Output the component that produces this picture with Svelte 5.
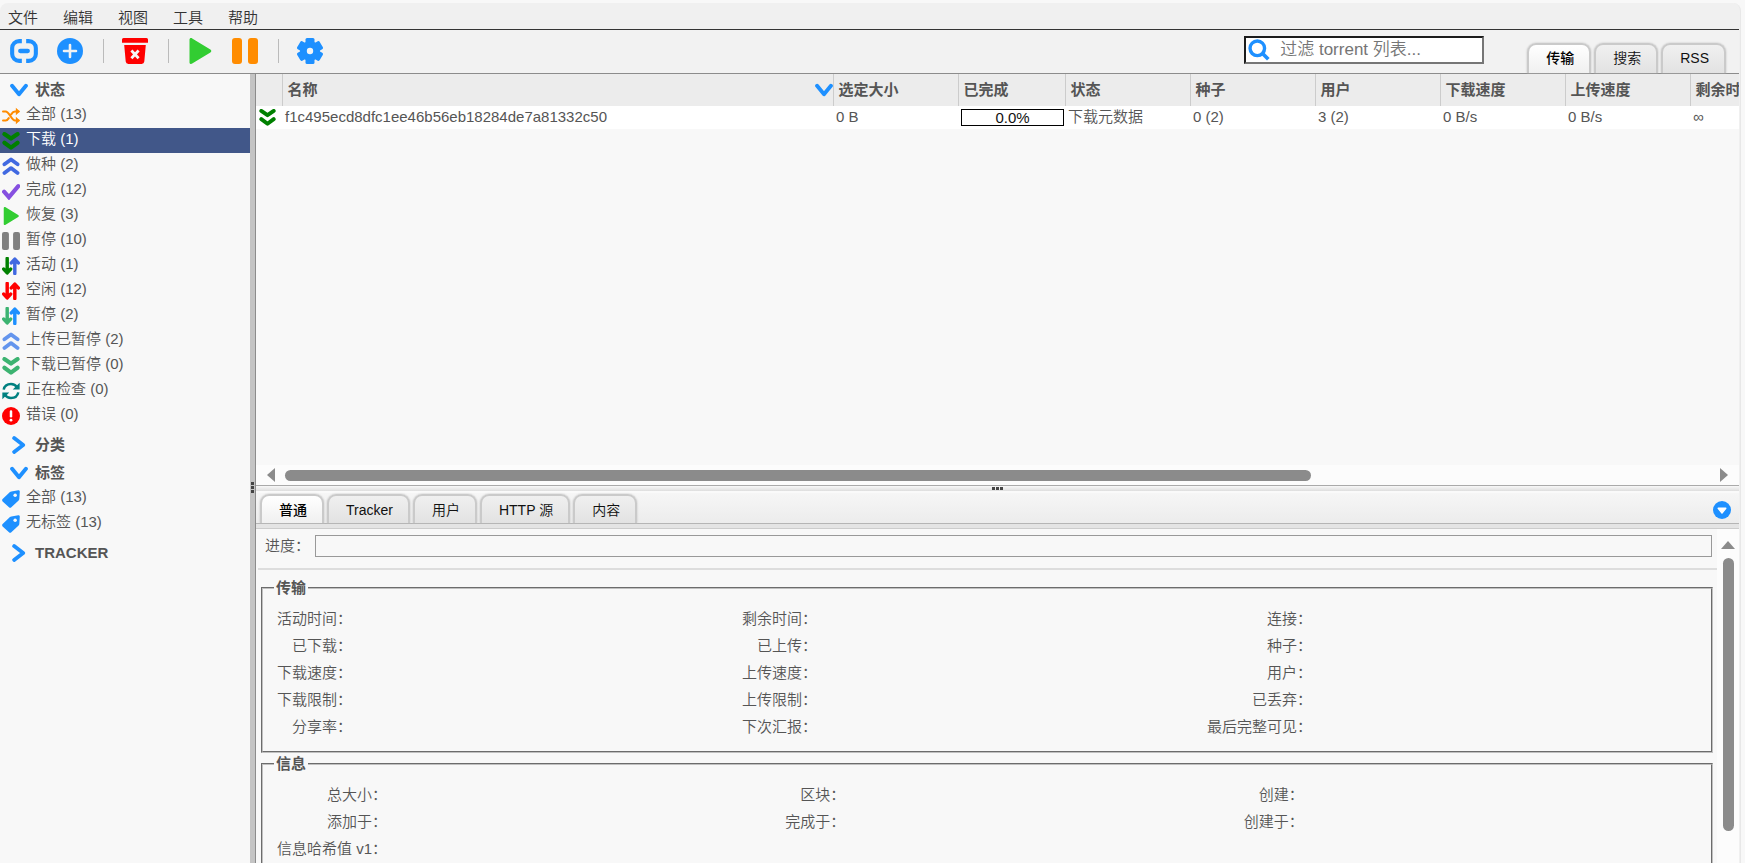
<script>
  const menus = ['文件', '编辑', '视图', '工具', '帮助'];
  const tools = [
    ['link', '添加链接', 28], ['plus', '添加文件', 26], null,
    ['trash', '删除', 26], null,
    ['play', '恢复', 26], ['pause', '暂停', 26], null,
    ['gear', '选项', 26]
  ];
  const statuses = [
    ['shuffle', '全部 (13)', '#ff8c00'],
    ['down', '下载 (1)', '#008000'],
    ['up', '做种 (2)', '#4169e1'],
    ['check', '完成 (12)', '#8650e0'],
    ['play', '恢复 (3)', '#32cd32'],
    ['pause', '暂停 (10)', '#808080'],
    ['updown', '活动 (1)', '#008000', '#4169e1'],
    ['updown', '空闲 (12)', '#ff0000', '#ff0000'],
    ['updown', '暂停 (2)', '#3cb371', '#1e90ff'],
    ['up', '上传已暂停 (2)', '#6495ed'],
    ['down', '下载已暂停 (0)', '#3cb371'],
    ['sync', '正在检查 (0)', '#008080'],
    ['error', '错误 (0)', '#ff0000']
  ];
  const tags = ['全部 (13)', '无标签 (13)'];
  const viewTabs = ['传输', '搜索', 'RSS'];
  const detailTabs = ['普通', 'Tracker', '用户', 'HTTP 源', '内容'];
  const columns = ['选定大小', '已完成', '状态', '种子', '用户', '下载速度', '上传速度', '剩余时间'];
  const transfer = [
    ['活动时间', '剩余时间', '连接'],
    ['已下载', '已上传', '种子'],
    ['下载速度', '上传速度', '用户'],
    ['下载限制', '上传限制', '已丢弃'],
    ['分享率', '下次汇报', '最后完整可见']
  ];
  const info = [
    ['总大小', '区块', '创建'],
    ['添加于', '完成于', '创建于'],
    ['信息哈希值 v1']
  ];
  const colors = { link: '#1e90ff', plus: '#1e90ff', trash: '#ff0000', play: '#32cd32', pause: '#ff8c00', gear: '#1e90ff' };
  let status = $state(1);
  let view = $state(0);
  let detail = $state(0);
</script>

{#snippet icon(name, size, a, b)}
  <svg width={size} height={size} viewBox="0 0 26 26" fill="none" aria-hidden="true">
    {#if name === 'link'}
      <path d="M11 3.800H8.500a6.500 6.500 0 0 0-6.500 6.500v5.400a6.500 6.500 0 0 0 6.500 6.500H11M15 3.800h2.500a6.500 6.500 0 0 1 6.500 6.500v5.400a6.500 6.500 0 0 1-6.500 6.500H15" stroke={a} stroke-width="3.800" />
      <path d="M9.500 13h7" stroke={a} stroke-width="4" stroke-linecap="round" />
    {:else if name === 'plus'}
      <circle cx="13" cy="13" r="13" fill={a} />
      <path d="M13 7v12M7 13h12" stroke="#f2f2f2" stroke-width="2.6" stroke-linecap="round" />
    {:else if name === 'trash'}
      <path d="M1.5 0h23A1.5 1.5 0 0 1 26 1.500v3.200H0V1.500A1.500 1.500 0 0 1 1.500 0zM2.200 7h21.600l-1.500 16.500a2.800 2.800 0 0 1-2.700 2.500H6.400a2.800 2.800 0 0 1-2.700-2.500z" fill={a} />
      <path d="M9.400 12.500l7.200 7.800M16.600 12.500l-7.200 7.800" stroke="#f5f5f5" stroke-width="2.800" />
    {:else if name === 'play'}
      <path d="M2.500 1.600C2.500.3 3.900-.4 5.200.4L23.400 11.500c1.200.7 1.200 2.300 0 3L5.200 25.600c-1.300.8-2.700.1-2.700-1.200z" fill={a} />
    {:else if name === 'pause'}
      <rect width="10" height="26" rx="3" fill={a} />
      <rect x="16" width="10" height="26" rx="3" fill={a} />
    {:else if name === 'gear'}
      <circle cx="13" cy="13" r="10" fill={a} />
      {#each [0, 60, 120] as turn}
        <rect x="8.500" y="0" width="9" height="26" rx="1.500" fill={a} transform="rotate({turn} 13 13)" />
      {/each}
      <circle cx="13" cy="13" r="3.200" fill="#f5f5f5" />
    {:else if name === 'shuffle'}
      <path d="M1.500 6.500h3.800c5 0 8.500 13 13.500 13H24M1.500 19.500h3.800c1.800 0 3.200-1.500 4.500-3.500M13.500 10.300c1.500-2.300 3.200-3.800 5.300-3.800H24" stroke={a} stroke-width="3" stroke-linecap="round" />
      <path d="M20 1l6 5.500-6 5.500zM20 14l6 5.500-6 5.500z" fill={a} />
    {:else if name === 'down'}
      <path d="M3.500 3l9.500 6.500L22.500 3M3.500 15.500l9.500 7 9.500-7" stroke={a} stroke-width="6" stroke-linecap="round" stroke-linejoin="round" />
    {:else if name === 'up'}
      <path d="M3.500 10.500L13 3.500l9.500 7M3.500 23l9.500-7 9.500 7" stroke={a} stroke-width="5.500" stroke-linecap="round" stroke-linejoin="round" />
    {:else if name === 'check'}
      <path d="M3 14l7 8L23.500 6" stroke={a} stroke-width="6" stroke-linecap="round" />
    {:else if name === 'updown'}
      <path d="M7.500 2v19M2.500 17.500l5 5.500 5-5.500" stroke={a} stroke-width="5" stroke-linecap="round" stroke-linejoin="round" />
      <path d="M18.500 24V5M13.500 8.500l5-5.500 5 5.500" stroke={b} stroke-width="5" stroke-linecap="round" stroke-linejoin="round" />
    {:else if name === 'sync'}
      <path d="M2.500 11C3.500 5.500 8 2.800 13 2.800c4 0 7 2 9 5M23.500 15c-1 5.500-5.500 8.200-10.500 8.200-4 0-7-2-9-5" stroke={a} stroke-width="3.600" />
      <path d="M25.500 1v10h-10zM.500 25V15h10z" fill={a} />
    {:else if name === 'error'}
      <circle cx="13" cy="13" r="13" fill={a} />
      <path d="M13 6.500v7" stroke="#fff" stroke-width="3.600" stroke-linecap="round" />
      <circle cx="13" cy="19" r="2" fill="#fff" />
    {:else if name === 'tag'}
      <path d="M13.500 2l10-1.500c1.400-.2 2.300.8 2.200 2.100L25 13c0 .8-.4 1.400-1 2L13.500 25c-1 1-2.400 1-3.400 0L.9 16.500c-1-1-1-2.400 0-3.400L11.500 3c.6-.6 1.200-.9 2-1z" fill={a} />
      <circle cx="19" cy="7.500" r="2.500" fill="#f8f8f8" />
    {:else if name === 'open'}
      <path d="M3 7l10 12L23 7" stroke={a} stroke-width="5.600" stroke-linecap="round" stroke-linejoin="round" />
    {:else if name === 'closed'}
      <path d="M6 3l13 10L6 23" stroke={a} stroke-width="5.600" stroke-linecap="round" stroke-linejoin="round" />
    {:else if name === 'search'}
      <circle cx="11" cy="11" r="8.600" stroke={a} stroke-width="4" />
      <path d="M17.500 17.500l6.500 6.500" stroke={a} stroke-width="4.400" />
    {:else if name === 'collapse'}
      <circle cx="13" cy="13" r="13" fill={a} />
      <path d="M7.500 10.500h11L13 17.500z" fill="#fff" stroke="#fff" stroke-width="2" stroke-linejoin="round" />
    {/if}
  </svg>
{/snippet}

{#snippet facts(title, rows)}
  <fieldset>
    <legend>{title}</legend>
    <div class="facts">
      {#each rows as row}
        {#each row as label}
          <span class="label">{label}：</span><span></span>
        {/each}
      {/each}
    </div>
  </fieldset>
{/snippet}

<div class="desktop">
  <div class="app">
    <nav class="menu">
      {#each menus as name}<button>{name}</button>{/each}
    </nav>

    <header class="toolbar">
      <div class="tools">
        {#each tools as tool}
          {#if tool}
            <button aria-label={tool[1]} class={tool[0]}>{@render icon(tool[0], tool[2], colors[tool[0]])}</button>
          {:else}
            <i class="rule"></i>
          {/if}
        {/each}
      </div>
      <label class="search">
        {@render icon('search', 22, '#1e90ff')}
        <input type="text" placeholder="过滤 torrent 列表..." aria-label="过滤 torrent 列表" />
      </label>
      <div class="tabs">
        {#each viewTabs as name, i}
          <button class:active={view === i} onclick={() => (view = i)}>{name}</button>
        {/each}
      </div>
    </header>

    <div class="body">
      <aside>
        <h2>{@render icon('open', 18, '#1e90ff')}状态</h2>
        <ul>
          {#each statuses as [name, text, a, b], i}
            <li><button class:selected={status === i} onclick={() => (status = i)}>{@render icon(name, 18, a, b)}<span>{text}</span></button></li>
          {/each}
        </ul>
        <h2 class="later">{@render icon('closed', 18, '#1e90ff')}分类</h2>
        <h2>{@render icon('open', 18, '#1e90ff')}标签</h2>
        <ul>
          {#each tags as text}
            <li><button>{@render icon('tag', 18, '#1e90ff')}<span>{text}</span></button></li>
          {/each}
        </ul>
        <h2 class="later">{@render icon('closed', 18, '#1e90ff')}TRACKER</h2>
      </aside>

      <div class="split vertical"><i></i><i></i><i></i></div>

      <main>
        <section class="list">
          <div class="viewport">
            <table>
              <colgroup>
                <col class="c-icon" /><col class="c-name" /><col class="c-std" /><col class="c-done" />
                <col class="c-std" /><col class="c-std" /><col class="c-std" /><col class="c-std" /><col class="c-std" /><col class="c-std" />
              </colgroup>
              <thead>
                <tr>
                  <th></th>
                  <th><div class="sorted">名称{@render icon('open', 18, '#1e90ff')}</div></th>
                  {#each columns as name}<th>{name}</th>{/each}
                </tr>
              </thead>
              <tbody>
                <tr>
                  <td class="mid">{@render icon('down', 17, '#008000')}</td>
                  <td>f1c495ecd8dfc1ee46b56eb18284de7a81332c50</td>
                  <td>0 B</td>
                  <td class="mid"><div class="percent">0.0%</div></td>
                  <td>下载元数据</td>
                  <td>0 (2)</td>
                  <td>3 (2)</td>
                  <td>0 B/s</td>
                  <td>0 B/s</td>
                  <td>∞</td>
                </tr>
              </tbody>
            </table>
          </div>
          <div class="hscroll">
            <svg width="8" height="14" viewBox="0 0 8 14"><path d="M8 0v14L0 7z" fill="#8b8b8b" /></svg>
            <div class="track"><div class="thumb"></div></div>
            <svg width="8" height="14" viewBox="0 0 8 14"><path d="M0 0v14l8-7z" fill="#8b8b8b" /></svg>
          </div>
        </section>

        <div class="split horizontal"><i></i><i></i><i></i></div>

        <section class="details">
          <div class="detailbar">
            <div class="tabs">
              {#each detailTabs as name, i}
                <button class:active={detail === i} onclick={() => (detail = i)}>{name}</button>
              {/each}
            </div>
            <button class="collapse" aria-label="折叠">{@render icon('collapse', 18, '#1e90ff')}</button>
          </div>
          <div class="strip"></div>
          <div class="pane">
            <div class="content">
              <div class="progress"><span>进度：</span><div class="bar"></div></div>
              <hr />
              {@render facts('传输', transfer)}
              {@render facts('信息', info)}
            </div>
            <div class="vscroll">
              <svg width="14" height="8" viewBox="0 0 14 8"><path d="M0 8h14L7 0z" fill="#8b8b8b" /></svg>
              <div class="thumb"></div>
            </div>
          </div>
        </section>
      </main>
    </div>
  </div>
</div>

<style>
  :global(body) {
    background: #fafafa;
  }
  .desktop {
    box-sizing: border-box;
    height: 100vh;
    padding: 3px 4px 0 0;
    background: #f8f8f8;
    overflow: hidden;
    font: 350 15px/20px "Liberation Sans", "Noto Sans CJK SC", sans-serif;
    color: #555;
  }
  .app {
    box-sizing: border-box;
    height: 100%;
    display: flex;
    flex-direction: column;
    padding-right: 1px;
    border-right: 1px solid #e8e8e8;
    border-radius: 8px 8px 0 0;
    background: #f0f0f0;
    overflow: hidden;
  }
  button {
    padding: 0;
    border: 0;
    background: none;
    font: inherit;
    color: inherit;
    cursor: pointer;
  }
  svg {
    display: block;
    flex: none;
  }
  .menu {
    display: flex;
    gap: 25px;
    height: 27px;
    box-sizing: border-box;
    padding: 3px 8px 0;
    border-bottom: 1px solid #333;
    color: #333;
  }
  .toolbar {
    box-sizing: border-box;
    height: 44px;
    display: flex;
    align-items: flex-end;
    border-bottom: 1px solid #8c8c8c;
    background: #f2f2f2;
  }
  .tools {
    flex: 1;
    align-self: center;
    display: flex;
    align-items: center;
    padding: 0 0 2px 10px;
    gap: 19px;
  }
  .tools .rule {
    width: 1px;
    height: 24px;
    margin: 0 -2px 0 1px;
    border-left: 1px solid #bbb;
  }
  .search {
    display: flex;
    align-items: center;
    gap: 10px;
    box-sizing: border-box;
    width: 240px;
    height: 28px;
    margin: 0 43px 9px 0;
    padding-left: 2px;
    border: 2px solid;
    border-color: #1c1c1c #767676 #767676 #1c1c1c;
    background: #fff;
  }
  .search input {
    flex: 1;
    min-width: 0;
    padding: 0;
    border: 0;
    outline: 0;
    background: none;
    font: 350 17px/22px "Liberation Sans", "Noto Sans CJK SC", sans-serif;
  }
  .search input::placeholder {
    color: #757575;
  }
  .tabs {
    display: flex;
    gap: 3px;
    font-size: 14px;
  }
  .tabs button {
    height: 30px;
    box-sizing: border-box;
    padding: 0 15px 0 17px;
    border: 2px solid #cacaca;
    border-bottom: 0;
    border-radius: 9px 9px 0 0;
    background: linear-gradient(#f0f0f0, #e2e2e2);
    box-shadow: 0 0 2px #bbb;
    color: #111;
    white-space: nowrap;
  }
  .tabs .active {
    background: linear-gradient(#fff, #f0f0f0);
    color: #000;
    font-weight: 500;
  }
  .toolbar .tabs {
    padding-right: 13px;
  }
  .toolbar .tabs button {
    padding-bottom: 2px;
  }
  .body {
    flex: 1;
    min-height: 0;
    display: flex;
  }
  aside {
    flex: none;
    width: 250px;
    background: #f8f8f8;
  }
  h2 {
    display: flex;
    align-items: center;
    gap: 7px;
    height: 26px;
    margin: 0;
    padding: 3px 0 0 10px;
    font-size: 15px;
    font-weight: 600;
  }
  .later {
    padding-top: 4px;
    height: 25px;
  }
  ul {
    margin: 0;
    padding: 0;
    list-style: none;
  }
  li button {
    display: flex;
    align-items: center;
    gap: 6px;
    width: 100%;
    height: 25px;
    padding-left: 2px;
  }
  li span {
    padding-bottom: 4px;
  }
  li .selected {
    background: #415789;
    color: #fff;
  }
  .split {
    flex: none;
    display: flex;
    align-items: center;
    justify-content: center;
    gap: 1px;
  }
  .split i {
    width: 3px;
    height: 3px;
    background: #444;
  }
  .vertical {
    box-sizing: border-box;
    width: 6px;
    flex-direction: column;
    padding-top: 38px;
    border-right: 1px solid #8c8c8c;
    background: #c4c4c4;
  }
  .horizontal {
    box-sizing: border-box;
    height: 6px;
    border-top: 1px solid #aaa;
    background: linear-gradient(#f8f8f8, #dedede);
  }
  main {
    flex: 1;
    min-width: 0;
    display: flex;
    flex-direction: column;
    background: #f8f8f8;
  }
  .list {
    flex: 411 1 0;
    min-height: 0;
    display: flex;
    flex-direction: column;
  }
  .viewport {
    flex: 1;
    min-height: 0;
    overflow: hidden;
  }
  table {
    table-layout: fixed;
    width: 1558px;
    border-collapse: collapse;
  }
  .c-icon { width: 26px; }
  .c-name { width: 551px; }
  .c-std { width: 125px; }
  .c-done { width: 107px; }
  th {
    box-sizing: border-box;
    height: 32px;
    padding: 0 0 1px 5px;
    border-right: 1px solid #ccc;
    background: #ececec;
    text-align: left;
    font-weight: 600;
    white-space: nowrap;
  }
  .sorted {
    display: flex;
    align-items: center;
    justify-content: space-between;
  }
  td {
    box-sizing: border-box;
    height: 23px;
    padding: 0 0 2px 3px;
    background: #fff;
    white-space: nowrap;
  }
  .mid {
    padding-bottom: 0;
  }
  .percent {
    box-sizing: border-box;
    height: 17px;
    margin-right: 1px;
    border: 1px solid #000;
    line-height: 16px;
    text-align: center;
    color: #111;
  }
  .hscroll {
    display: flex;
    align-items: center;
    justify-content: space-between;
    gap: 10px;
    height: 20px;
    padding: 0 11px;
    background: #fcfcfc;
  }
  .track {
    flex: 1;
  }
  .thumb {
    border-radius: 6px;
    background: #8b8b8b;
  }
  .track .thumb {
    width: 72%;
    height: 11px;
  }
  .details {
    flex: 372 1 0;
    min-height: 0;
    display: flex;
    flex-direction: column;
  }
  .detailbar {
    box-sizing: border-box;
    height: 33px;
    display: flex;
    align-items: flex-end;
    justify-content: space-between;
    padding: 0 8px 0 4px;
    border-top: 2px solid #fafafa;
    border-bottom: 1px solid #b5b5b5;
    background: linear-gradient(#f6f6f6, #ececec);
  }
  .detailbar .collapse {
    padding-bottom: 4px;
  }
  .detailbar .tabs button {
    height: 29px;
  }
  .strip {
    flex: none;
    height: 4px;
    border-bottom: 1px solid #ccc;
    background: #e4e4e4;
  }
  .pane {
    flex: 1;
    min-height: 0;
    display: flex;
  }
  .content {
    flex: 1;
    overflow: hidden;
    padding: 6px 0 0 2px;
  }
  .progress {
    display: flex;
    align-items: center;
    gap: 5px;
    padding: 0 5px 0 7px;
  }
  .bar {
    box-sizing: border-box;
    flex: 1;
    height: 22px;
    border: 1px solid #999;
  }
  hr {
    height: 2px;
    margin: 11px 0 8px;
    border: 0;
    background: #ddd;
  }
  fieldset {
    margin: 0 4px 1px 3px;
    padding: 7px 9px 11px 14px;
    border: 2px groove #c0c0c0;
  }
  legend {
    margin-left: -3px;
    padding: 0 2px;
    font-weight: 600;
  }
  .facts {
    display: grid;
    grid-template-columns: auto 1fr auto 1fr auto 1fr;
    line-height: 27px;
  }
  .label {
    text-align: right;
    white-space: nowrap;
  }
  .vscroll {
    flex: none;
    width: 22px;
    display: flex;
    flex-direction: column;
    align-items: center;
    gap: 9px;
    padding-top: 12px;
    background: #fcfcfc;
  }
  .vscroll .thumb {
    width: 11px;
    height: 273px;
  }
</style>
